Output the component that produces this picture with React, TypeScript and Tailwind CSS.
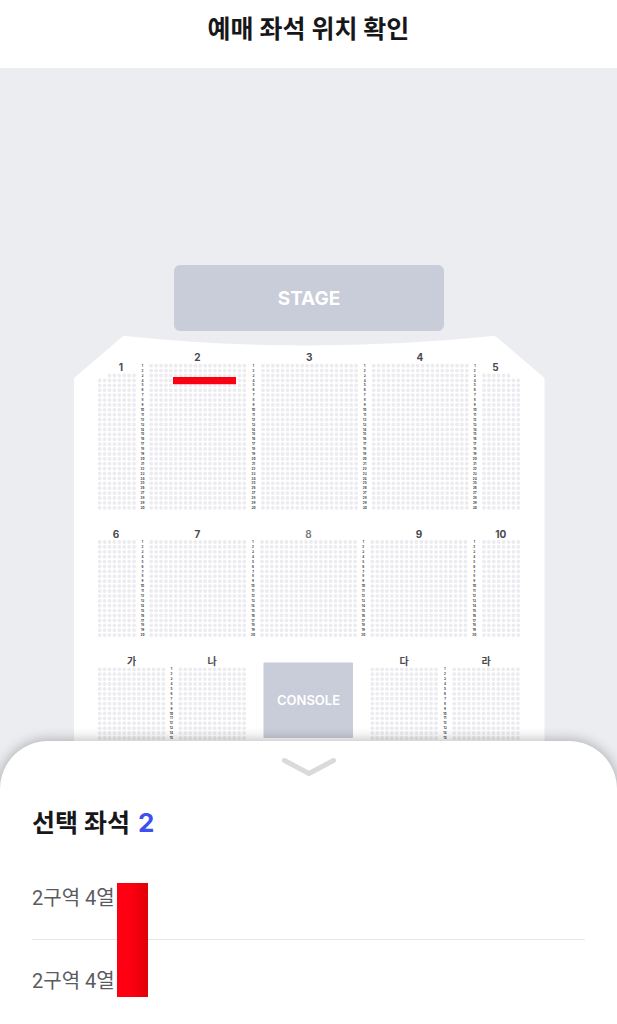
import React from "react";

type Block = { label: string; labelX: number; x: number; cols: number; firstRow?: [number, number]; light?: boolean };
type Tier = { top: number; rows: number; labelY: number; numberXs: number[]; blocks: Block[] };

const PITCH = 4.9;

// firstRow holds the column range of a shortened third row; the block then has no rows above it.
const tiers: Tier[] = [
  {
    top: 365.7,
    rows: 30,
    labelY: 361,
    numberXs: [142.5, 253.5, 364.7, 474.8],
    blocks: [
      { label: "1", labelX: 121, x: 99.7, cols: 8, firstRow: [2, 7] },
      { label: "2", labelX: 197.5, x: 151.2, cols: 20 },
      { label: "3", labelX: 309.3, x: 263, cols: 20 },
      { label: "4", labelX: 420, x: 373.7, cols: 20 },
      { label: "5", labelX: 495.5, x: 484, cols: 8, firstRow: [0, 5] },
    ],
  },
  {
    top: 542,
    rows: 20,
    labelY: 537.5,
    numberXs: [142.5, 253, 363.3, 474.3],
    blocks: [
      { label: "6", labelX: 116, x: 99.7, cols: 8 },
      { label: "7", labelX: 197.5, x: 151.2, cols: 20 },
      { label: "8", labelX: 308.5, x: 262, cols: 20, light: true },
      { label: "9", labelX: 419, x: 372.3, cols: 20 },
      { label: "10", labelX: 500.7, x: 484, cols: 8 },
    ],
  },
  {
    top: 669.3,
    rows: 15,
    labelY: 664.5,
    numberXs: [171.4, 445],
    blocks: [
      { label: "가", labelX: 131.5, x: 99.7, cols: 14 },
      { label: "나", labelX: 212, x: 180.4, cols: 14 },
      { label: "다", labelX: 404, x: 372.3, cols: 14 },
      { label: "라", labelX: 486, x: 454.2, cols: 14 },
    ],
  },
];

function SeatRow({ x, y, cols }: { x: number; y: number; cols: number }) {
  return (
    <path
      d={`M${x} ${y}h${(cols - 1) * PITCH + 0.1}`}
      stroke="#ebebf0"
      strokeWidth="3.8"
      strokeLinecap="round"
      strokeDasharray={`0 ${PITCH}`}
    />
  );
}

function SeatTier({ tier }: { tier: Tier }) {
  const rows = Array.from({ length: tier.rows }, (_, i) => i);
  return (
    <g>
      {tier.blocks.map((b) => (
        <g key={b.label}>
          <text
            x={b.labelX}
            y={b.firstRow ? tier.labelY + 10 : tier.labelY}
            fontSize="10"
            fontWeight={b.light ? "600" : "700"}
            textAnchor="middle"
            fill={b.light ? "#77777b" : "#4a4a4e"}
          >
            {b.label}
          </text>
          {rows.map((r) => {
            const y = tier.top + r * PITCH;
            if (b.firstRow && r < 2) return null;
            if (b.firstRow && r === 2) {
              const [from, to] = b.firstRow;
              return <SeatRow key={r} x={b.x + from * PITCH} y={y} cols={to - from + 1} />;
            }
            return <SeatRow key={r} x={b.x} y={y} cols={b.cols} />;
          })}
        </g>
      ))}
      {tier.numberXs.map((x) =>
        rows.map((r) => (
          <text
            key={`${x}-${r}`}
            x={x}
            y={tier.top + r * PITCH + 1.1}
            fontSize="3"
            fontWeight="700"
            textAnchor="middle"
            fill="#333336"
          >
            {r + 1}
          </text>
        )),
      )}
    </g>
  );
}

function SeatMap() {
  return (
    <svg viewBox="0 68 617 721" className="block w-full" role="group" aria-label="좌석 배치도">
      <path d="M74 378L122 337Q123 336 125 336.100Q308 355 493 336.100Q495 336 496.500 337L544.500 378V800H74Z" fill="#fff" />
      <rect x="174" y="265" width="270" height="66" rx="6" fill="#c9ccd9" />
      <text x="309" y="304.500" fontSize="19" fontWeight="700" textAnchor="middle" fill="#fff">
        STAGE
      </text>
      {tiers.map((t) => (
        <SeatTier key={t.top} tier={t} />
      ))}
      <rect x="263.500" y="662.500" width="89.500" height="75.500" rx="1" fill="#c9ccd9" />
      <text x="308.500" y="704.500" fontSize="13" fontWeight="600" textAnchor="middle" fill="#fff">
        CONSOLE
      </text>
      <rect x="173" y="377" width="63" height="7.200" fill="#fb0010" />
    </svg>
  );
}

const seats = ["2구역 4열", "2구역 4열"];

export default function App() {
  return (
    <div className="flex min-h-screen flex-col bg-white font-['Inter','Noto_Sans_CJK_KR',sans-serif] text-[#17171a]">
      <header className="flex h-[68px] items-center justify-center pb-2.5">
        <h1 className="text-[25px] leading-9 font-bold">예매 좌석 위치 확인</h1>
      </header>
      <main className="flex flex-1 flex-col">
        <section className="bg-[#ebedf1]">
          <SeatMap />
        </section>
        <section className="relative -mt-12 flex-1 rounded-t-[48px] bg-white px-8 pt-4 shadow-[0_0_14px_rgba(0,0,0,0.32)]">
          <button type="button" aria-label="접기" className="mx-auto block h-5 w-14">
            <svg viewBox="0 0 56 20" className="h-5 w-14" fill="none" stroke="#dadadc" strokeWidth="5" strokeLinecap="round" strokeLinejoin="round">
              <path d="M3.500 3.500L28 16.500L52.500 3.500" />
            </svg>
          </button>
          <h2 className="mt-7 flex items-center gap-2 text-[25px] leading-9 font-bold">
            선택 좌석
            <span className="text-[26px] font-bold text-[#404ff0]">2</span>
          </h2>
          <div className="relative mt-4">
            <ul className="font-['Roboto','Noto_Sans_CJK_KR',sans-serif] text-[20px] text-[#5b5b5f]">
              {seats.map((seat, i) => (
                <li key={i} className="flex h-[83px] items-center border-b border-[#e6e6e9] last:border-transparent">
                  {seat}
                </li>
              ))}
            </ul>
            <div className="absolute top-[26px] left-[85px] h-[114px] w-[31px] bg-linear-to-r from-[#ff0012] from-40% to-[#e00008]" />
          </div>
        </section>
      </main>
    </div>
  );
}
